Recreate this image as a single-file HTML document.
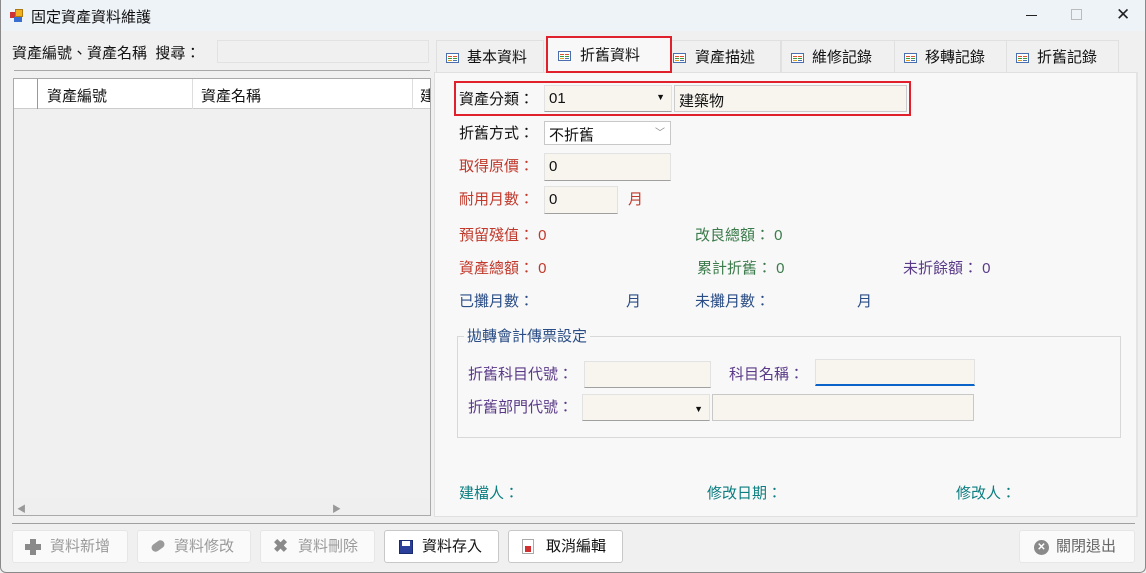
<!DOCTYPE html>
<html><head><meta charset="utf-8"><style>
*{box-sizing:border-box;margin:0;padding:0}
body{width:1146px;height:573px;overflow:hidden;background:#f0f0f0;font-family:"Liberation Sans","Noto Sans CJK TC","Noto Sans CJK SC",sans-serif;font-size:15px;color:#111;position:relative}
.a{position:absolute;white-space:nowrap}
.win{position:absolute;left:0;top:0;width:1146px;height:573px;border:1px solid #8a8a8a;border-top:none;border-radius:0 0 6px 6px}
.title{left:0;top:0;width:1146px;height:31px;background:#eef3f8}
.inp{position:absolute;background:#f8f5ef;border:1px solid #e2e2e2;border-bottom:1px solid #a0a0a0;font-size:15px;padding:4px 4px}
.btn{position:absolute;top:530px;height:33px;background:#fafafa;border:1px solid #e6e6e6;border-radius:3px;color:#9a9a9a;font-size:15px;line-height:31px}
.btn.on{background:#fff;border-color:#c8c8c8;color:#111}
.tab{position:absolute;top:40px;height:32px;background:#f0f0f0;border:1px solid #e0e0e0;border-bottom:none;line-height:34px;padding-left:30px}
.ti{position:absolute;left:9px;top:12px;width:13px;height:10px;border:1px solid #4a6fb0;background:#fff}
.ti:before{content:"";position:absolute;left:1px;top:2px;width:4px;height:5px;background:linear-gradient(#e0522c 0 1px,transparent 1px 2px,#3a9a3a 2px 3px,transparent 3px 4px,#e0a020 4px 5px)}
.ti:after{content:"";position:absolute;left:6px;top:2px;width:4px;height:5px;background:linear-gradient(#e0522c 0 1px,transparent 1px 2px,#3a9a3a 2px 3px,transparent 3px 4px,#4a6fb0 4px 5px)}
.r{color:#c0392b}.g{color:#3b7a4a}.p{color:#5a3a88}.b{color:#2a4d85}.t{color:#0b7d80}
</style></head><body>
<div class="a title"></div>
<div class="a" style="left:10px;top:9px;width:13px;height:13px">
<div class="a" style="left:0;top:3px;width:5px;height:6px;background:#c33"></div>
<div class="a" style="left:5px;top:0;width:8px;height:8px;background:#f0b020;border:1px solid #b07a10"></div>
<div class="a" style="left:4px;top:8px;width:8px;height:5px;background:#3a6ed0"></div></div>
<div class="a" style="left:31px;top:6px;font-size:15px">固定資產資料維護</div>
<div class="a" style="left:1026px;top:15px;width:11px;height:1px;background:#222"></div>
<div class="a" style="left:1071px;top:9px;width:11px;height:11px;border:1px solid #bbb"></div>
<div class="a" style="left:1116px;top:5px;font-size:17px;color:#222;font-weight:300">✕</div>
<div class="win"></div>

<div class="a" style="left:12px;top:42px">資產編號、資產名稱&nbsp; 搜尋：</div>
<div class="a" style="left:217px;top:40px;width:212px;height:23px;background:#f0f0f0;border:1px solid #e2e2e2"></div>
<div class="a" style="left:14px;top:70px;width:416px;height:1px;background:#a8a8a8"></div>
<div class="a" style="left:13px;top:78px;width:418px;height:438px;background:#f0f0f0;border:1px solid #aaa"></div>
<div class="a" style="left:14px;top:79px;width:416px;height:30px;background:#fff;border-bottom:1px solid #ccc"></div>
<div class="a" style="left:37px;top:79px;width:1px;height:30px;background:#999"></div>
<div class="a" style="left:192px;top:79px;width:1px;height:30px;background:#ddd"></div>
<div class="a" style="left:412px;top:79px;width:1px;height:30px;background:#ddd"></div>
<div class="a" style="left:47px;top:85px">資產編號</div>
<div class="a" style="left:201px;top:85px">資產名稱</div>
<div class="a" style="left:420px;top:85px;width:10px;overflow:hidden">建</div>
<div class="a" style="left:14px;top:498px;width:416px;height:17px;background:#efefef"></div>
<div class="a" style="left:17px;top:502px;color:#999;font-size:9px">◀</div>
<div class="a" style="left:332px;top:502px;color:#999;font-size:9px">▶</div>

<div class="tab" style="left:436px;width:108px"><span class="ti"></span>基本資料</div>
<div class="tab" style="left:670px;width:111px;padding-left:24px"><span class="ti" style="left:2px"></span>資產描述</div>
<div class="tab" style="left:781px;width:114px"><span class="ti"></span>維修記錄</div>
<div class="tab" style="left:894px;width:113px"><span class="ti"></span>移轉記錄</div>
<div class="tab" style="left:1006px;width:113px"><span class="ti"></span>折舊記錄</div>
<div class="a" style="left:434px;top:72px;width:704px;height:445px;background:#f8f8f8;border:1px solid #e0e0e0;border-right:2px solid #e4e4e4"></div>
<div class="tab" style="left:546px;top:36px;width:126px;height:37px;background:#f8f8f8;border:2px solid #e0202a;line-height:36px;padding-left:32px"><span class="ti" style="left:10px;top:13px"></span>折舊資料</div>

<div class="a" style="left:454px;top:81px;width:457px;height:35px;border:2px solid #e0202a"></div>
<div class="a" style="left:459px;top:88px">資產分類：</div>
<div class="inp" style="left:544px;top:85px;width:128px;height:27px">01<span style="position:absolute;right:6px;top:6px;font-size:9px">▼</span></div>
<div class="inp" style="left:674px;top:85px;width:233px;height:27px;border:1px solid #ccc">建築物</div>
<div class="a" style="left:459px;top:122px">折舊方式：</div>
<div class="inp" style="left:544px;top:121px;width:127px;height:24px;background:#fff;border:1px solid #c8c8c8;padding-top:2px">不折舊<span style="position:absolute;right:5px;top:2px;font-size:10px;color:#888">﹀</span></div>
<div class="a r" style="left:459px;top:155px">取得原價：</div>
<div class="inp" style="left:544px;top:153px;width:127px;height:28px">0</div>
<div class="a r" style="left:459px;top:188px">耐用月數：</div>
<div class="inp" style="left:544px;top:186px;width:74px;height:28px">0</div>
<div class="a r" style="left:628px;top:188px">月</div>
<div class="a r" style="left:459px;top:224px">預留殘值： 0</div>
<div class="a g" style="left:695px;top:224px">改良總額： 0</div>
<div class="a r" style="left:459px;top:257px">資產總額： 0</div>
<div class="a g" style="left:697px;top:257px">累計折舊： 0</div>
<div class="a p" style="left:903px;top:257px">未折餘額： 0</div>
<div class="a b" style="left:459px;top:290px">已攤月數：</div>
<div class="a b" style="left:626px;top:290px">月</div>
<div class="a b" style="left:695px;top:290px">未攤月數：</div>
<div class="a b" style="left:857px;top:290px">月</div>

<div class="a" style="left:457px;top:336px;width:664px;height:102px;border:1px solid #d8d8d8"></div>
<div class="a b" style="left:464px;top:325px;background:#f8f8f8;padding:0 3px">拋轉會計傳票設定</div>
<div class="a p" style="left:468px;top:363px">折舊科目代號：</div>
<div class="inp" style="left:584px;top:361px;width:127px;height:27px"></div>
<div class="a p" style="left:729px;top:363px">科目名稱：</div>
<div class="inp" style="left:815px;top:359px;width:160px;height:27px;border-bottom:2px solid #0a63c9"></div>
<div class="a p" style="left:468px;top:396px">折舊部門代號：</div>
<div class="inp" style="left:582px;top:394px;width:128px;height:27px"><span style="position:absolute;right:6px;top:9px;font-size:9px">▼</span></div>
<div class="inp" style="left:712px;top:394px;width:262px;height:27px;border:1px solid #c8c8c8"></div>

<div class="a t" style="left:459px;top:482px">建檔人：</div>
<div class="a t" style="left:707px;top:482px">修改日期：</div>
<div class="a t" style="left:956px;top:482px">修改人：</div>

<div class="a" style="left:12px;top:523px;width:1123px;height:1px;background:#a0a0a0"></div>
<div class="btn" style="left:12px;width:116px"><span style="position:absolute;left:12px;top:8px;width:16px;height:16px"><span class="a" style="left:5px;top:0;width:6px;height:16px;background:#8a8a8a"></span><span class="a" style="left:0;top:5px;width:16px;height:6px;background:#8a8a8a"></span></span><span style="margin-left:37px">資料新增</span></div>
<div class="btn" style="left:137px;width:114px"><span class="a" style="left:13px;top:11px;width:14px;height:8px;background:#9a9a9a;border-radius:4px;transform:rotate(-35deg)"></span><span style="margin-left:36px">資料修改</span></div>
<div class="btn" style="left:260px;width:115px"><span class="a" style="left:12px;top:0;font-size:18px;color:#8a8a8a;font-weight:bold">✖</span><span style="margin-left:37px">資料刪除</span></div>
<div class="btn on" style="left:384px;width:115px"><span class="a" style="left:14px;top:9px;width:14px;height:14px;background:#2a3f9a;border:1px solid #1a2a70"><span class="a" style="left:2px;top:0;width:8px;height:5px;background:#fff"></span></span><span style="margin-left:37px">資料存入</span></div>
<div class="btn on" style="left:508px;width:115px"><span class="a" style="left:13px;top:8px;width:12px;height:15px;background:#fff;border:1px solid #aaa"><span class="a" style="left:2px;top:6px;width:6px;height:6px;background:#d03030"></span></span><span style="margin-left:37px">取消編輯</span></div>
<div class="btn" style="left:1019px;width:116px;color:#666"><span class="a" style="left:14px;top:9px;width:15px;height:15px;border-radius:50%;background:#8a8a8a;color:#fff;font-size:10px;line-height:15px;text-align:center;font-weight:bold">✕</span><span style="margin-left:36px">關閉退出</span></div>
</body></html>
